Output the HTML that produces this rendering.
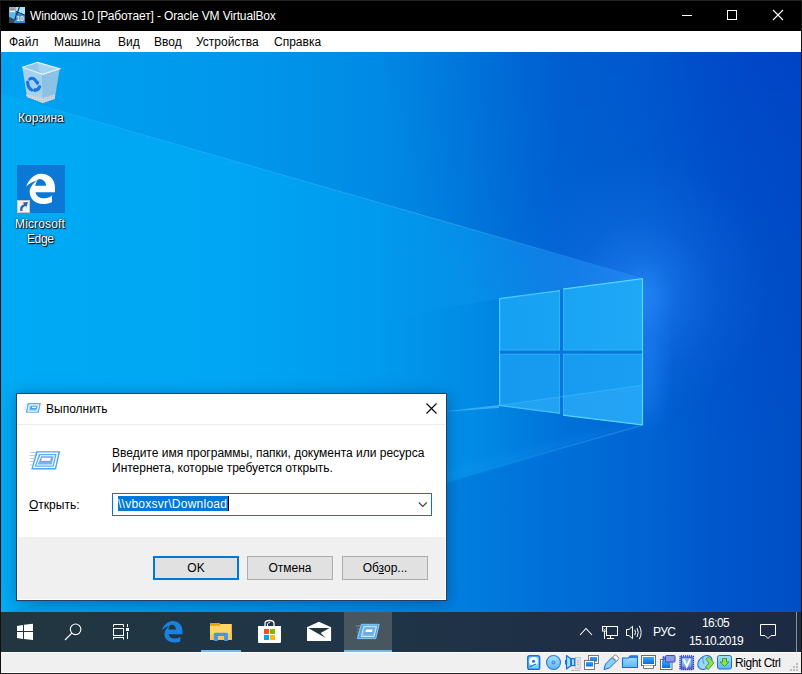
<!DOCTYPE html>
<html><head><meta charset="utf-8">
<style>
html,body{margin:0;padding:0}
body{width:802px;height:674px;overflow:hidden;position:relative;background:#333;font-family:"Liberation Sans",sans-serif;font-size:12px}
.a{position:absolute}
.t{position:absolute;white-space:nowrap;line-height:14px;font-size:12px}
</style></head><body>

<!-- title bar -->
<div class="a" style="left:1px;top:1px;width:800px;height:30px;background:#000"></div>
<div class="t" style="left:30px;top:9px;color:#fff;letter-spacing:-0.14px">Windows 10 [Работает] - Oracle VM VirtualBox</div>

<!-- title icon -->
<svg class="a" style="left:9px;top:7px" width="16" height="16" viewBox="0 0 16 16">
<rect x="0" y="0" width="16" height="16" fill="#3a4856"/>
<polygon points="0,5 7,5 5.8,12.7 0,10" fill="#58b8f0"/>
<polygon points="6.5,0 16,0 16,8.1 6.8,4.5" fill="#a8e4fa"/>
<polygon points="6.8,4.5 16,8.1 16,16 4.5,16 5.8,12.7" fill="#2c8ee0"/>
<polygon points="0,10 5.8,12.7 4.5,16 0,16" fill="#3c4a58"/>
<rect x="0.3" y="0.3" width="6.2" height="5" fill="#d8e0e8"/>
<rect x="1" y="1.2" width="4.8" height="2.2" fill="#8a949e"/>
<rect x="1" y="4" width="5.2" height="0.8" fill="#fff"/>
<line x1="10.4" y1="0" x2="5.8" y2="12.7" stroke="#1a2a40" stroke-width="1.1"/>
<line x1="6.8" y1="4.5" x2="16" y2="8.1" stroke="#1a2a40" stroke-width="0.9"/>
<rect x="7" y="8" width="8.5" height="6" fill="#5a8ab8" opacity="0.6"/>
<text x="7.3" y="13.8" font-size="7" font-family="Liberation Sans" fill="#f0f4f8" font-weight="bold" letter-spacing="-0.3">10</text>
</svg>
<!-- window buttons -->
<div class="a" style="left:682px;top:15px;width:10px;height:1px;background:#fff"></div>
<div class="a" style="left:727px;top:10px;width:8px;height:8px;border:1px solid #fff"></div>
<svg class="a" style="left:772px;top:9px" width="12" height="12" viewBox="0 0 12 12"><path d="M1 1L11 11M11 1L1 11" stroke="#fff" stroke-width="1.1"/></svg>

<!-- menu bar -->
<div class="a" style="left:1px;top:31px;width:800px;height:21px;background:#fff"></div>
<div class="t" style="left:9px;top:35px;color:#000">Файл</div>
<div class="t" style="left:54px;top:35px;color:#000">Машина</div>
<div class="t" style="left:118px;top:35px;color:#000">Вид</div>
<div class="t" style="left:154px;top:35px;color:#000">Ввод</div>
<div class="t" style="left:196px;top:35px;color:#000">Устройства</div>
<div class="t" style="left:274px;top:35px;color:#000">Справка</div>

<!-- desktop -->
<svg class="a" style="left:1px;top:52px" width="800" height="560" viewBox="1 52 800 560">
<defs>
<linearGradient id="bg" x1="1" y1="0" x2="801" y2="0" gradientUnits="userSpaceOnUse">
<stop offset="0" stop-color="#00aaf4"/><stop offset="0.28" stop-color="#00a6f3"/><stop offset="0.47" stop-color="#009aee"/><stop offset="0.587" stop-color="#008ce6"/><stop offset="0.623" stop-color="#0084e2"/><stop offset="0.7" stop-color="#0072da"/><stop offset="0.8025" stop-color="#0064d2"/><stop offset="0.9" stop-color="#0056cc"/><stop offset="1" stop-color="#004ec6"/>
</linearGradient>
<linearGradient id="topg" x1="1" y1="0" x2="801" y2="0" gradientUnits="userSpaceOnUse">
<stop offset="0" stop-color="#00a4f2"/><stop offset="0.12" stop-color="#009eef"/><stop offset="0.32" stop-color="#0096eb"/><stop offset="0.47" stop-color="#008ae5"/><stop offset="0.56" stop-color="#007ede"/><stop offset="0.7" stop-color="#0066d3"/><stop offset="0.8025" stop-color="#0064d2"/><stop offset="0.9" stop-color="#0056cc"/><stop offset="1" stop-color="#004ec6"/>
</linearGradient>
<linearGradient id="botg" x1="1" y1="0" x2="801" y2="0" gradientUnits="userSpaceOnUse">
<stop offset="0" stop-color="#00a2f1"/><stop offset="0.31" stop-color="#0092e9"/><stop offset="0.555" stop-color="#0080e0"/><stop offset="0.686" stop-color="#0070d8"/><stop offset="0.8025" stop-color="#0064d2"/><stop offset="0.9" stop-color="#0056cc"/><stop offset="1" stop-color="#004ec6"/>
</linearGradient>
<linearGradient id="lineg" x1="1" y1="0" x2="643" y2="0" gradientUnits="userSpaceOnUse">
<stop offset="0" stop-color="#60c8ff" stop-opacity="0"/><stop offset="0.12" stop-color="#60c8ff" stop-opacity="0.2"/><stop offset="0.7" stop-color="#80d8ff" stop-opacity="0.3"/><stop offset="1" stop-color="#80d8ff" stop-opacity="0.1"/>
</linearGradient>
<linearGradient id="line2" x1="643" y1="0" x2="440" y2="0" gradientUnits="userSpaceOnUse">
<stop offset="0" stop-color="#60c8ff" stop-opacity="0.35"/><stop offset="1" stop-color="#60c8ff" stop-opacity="0"/>
</linearGradient>
<radialGradient id="halo" cx="643" cy="300" r="75" gradientUnits="userSpaceOnUse">
<stop offset="0" stop-color="#2a90ff" stop-opacity="0.8"/><stop offset="0.45" stop-color="#1a78f0" stop-opacity="0.45"/><stop offset="1" stop-color="#1a70f0" stop-opacity="0"/>
</radialGradient>
<linearGradient id="paneT" x1="499" y1="0" x2="643" y2="0" gradientUnits="userSpaceOnUse">
<stop offset="0" stop-color="#16a0f2"/><stop offset="1" stop-color="#1ea8f6"/>
</linearGradient>
<linearGradient id="paneB" x1="499" y1="0" x2="643" y2="0" gradientUnits="userSpaceOnUse">
<stop offset="0" stop-color="#169af0"/><stop offset="1" stop-color="#1a9ef4"/>
</linearGradient>
<filter id="blur3" x="-30%" y="-30%" width="160%" height="160%"><feGaussianBlur stdDeviation="3"/></filter>
<filter id="blur8" x="-50%" y="-50%" width="200%" height="200%"><feGaussianBlur stdDeviation="10"/></filter>
<filter id="blur1"><feGaussianBlur stdDeviation="0.7"/></filter>
</defs>
<rect x="1" y="52" width="800" height="560" fill="url(#bg)"/>
<polygon points="1,52 801,52 801,278.6 643.5,278.6 1,94" fill="url(#topg)"/>
<polygon points="1,614 643.5,425 801,425 801,612 1,612" fill="url(#botg)"/>
<defs><radialGradient id="trd" cx="801" cy="40" r="420" gradientUnits="userSpaceOnUse"><stop offset="0" stop-color="#003cc4" stop-opacity="0.6"/><stop offset="0.5" stop-color="#0040c6" stop-opacity="0.25"/><stop offset="1" stop-color="#0040c6" stop-opacity="0"/></radialGradient></defs>
<rect x="1" y="52" width="800" height="560" fill="url(#trd)"/>
<polygon points="643,425 446,481 446,470 643,420" fill="#30a8ff" opacity="0.12" filter="url(#blur3)"/>
<line x1="1" y1="94" x2="643" y2="278.6" stroke="url(#lineg)" stroke-width="1"/>
<line x1="643" y1="425" x2="446" y2="481" stroke="url(#line2)" stroke-width="1"/>
<defs><linearGradient id="wedge" x1="380" y1="0" x2="643" y2="0" gradientUnits="userSpaceOnUse"><stop offset="0" stop-color="#20a0ff" stop-opacity="0"/><stop offset="1" stop-color="#30a8ff" stop-opacity="0.45"/></linearGradient>
<radialGradient id="halo2" cx="640" cy="285" r="130" gradientUnits="userSpaceOnUse"><stop offset="0" stop-color="#3a98ff" stop-opacity="0.45"/><stop offset="0.5" stop-color="#2a80f8" stop-opacity="0.18"/><stop offset="1" stop-color="#2a80f8" stop-opacity="0"/></radialGradient></defs>
<polygon points="380,203.5 643,278.6 499,298.5 380,320" fill="url(#wedge)"/>
<rect x="500" y="150" width="301" height="280" fill="url(#halo2)"/>
<ellipse cx="647" cy="345" rx="12" ry="78" fill="#2484fa" opacity="0.65" filter="url(#blur8)"/>
<rect x="540" y="200" width="261" height="260" fill="url(#halo)" opacity="0.45"/>
<polygon points="499,298.5 643,278.6 643,425 499,405.6" fill="#0a76dc"/>
<polygon points="499.5,298.5 560,290.5 560,350.5 499.5,350.5" fill="url(#paneT)"/>
<polygon points="563,289 642.6,278.6 642.6,350.5 563,350.5" fill="url(#paneT)"/>
<polygon points="499.5,353.8 560,353.8 560,413.5 499.5,405.6" fill="url(#paneB)"/>
<polygon points="563,353.8 642.6,353.8 642.6,425 563,415.3" fill="url(#paneB)"/>
<polygon points="499,405.6 560,397 560,413.5" fill="#50bcff" opacity="0.2"/>
<polygon points="563,396.5 642.6,385.2 642.6,425 563,415.3" fill="#50bcff" opacity="0.2"/>
<polygon points="440,412 499,405 499,408" fill="#7fd8ff" opacity="0.45" filter="url(#blur1)"/>
<g fill="none" stroke="#50d0ff" stroke-width="1" stroke-opacity="0.35">
<polygon points="500,299 559.5,291 559.5,350 500,350"/>
<polygon points="563.5,289.5 642,279.2 642,350 563.5,350"/>
<polygon points="500,354.3 559.5,354.3 559.5,413 500,405.2"/>
<polygon points="563.5,354.3 642,354.3 642,424.5 563.5,414.8"/>
</g>
<g fill="none" stroke="#60e0ff" stroke-width="1">
<polyline points="499.5,405.6 499.5,298.5 560,290.5" stroke-opacity="0.75"/>
<polyline points="563,289 642.6,278.6 642.6,425 563,415.3" stroke-opacity="0.95"/>
<polyline points="499.5,405.6 560,413.5" stroke-opacity="0.6"/>
<line x1="499" y1="405.6" x2="642.6" y2="385.2" stroke-opacity="0.3"/>
</g>
</svg>


<!-- desktop icons -->
<svg class="a" style="left:17px;top:58px" width="48" height="48" viewBox="0 0 48 48">
<defs><pattern id="dots" width="2" height="2" patternUnits="userSpaceOnUse"><rect width="2" height="2" fill="#d4d8dc"/><rect width="1" height="1" fill="#c0c6cc"/></pattern></defs>
<polygon points="5.3,9.3 25.6,16.4 26,45 10,39" fill="#a4d2ee"/>
<polygon points="25.6,16.4 42.7,10.7 37.7,41 26,45" fill="#8ec2e4"/>
<polygon points="8.7,36.5 25.8,40 26,45 10,39" fill="url(#dots)"/>
<polygon points="25.8,40 38.1,36.5 37.7,41 26,45" fill="url(#dots)" opacity="0.85"/>
<polygon points="5.3,9.3 20.7,4.3 42.7,10.7 25.6,16.4" fill="#90c8ea"/>
<polygon points="20.7,4.3 42.7,10.7 25.6,16.4 21.5,12" fill="#a6d4f0"/>
<polyline points="5.3,9.3 20.7,4.3 42.7,10.7 25.6,16.4 5.3,9.3" fill="none" stroke="#e4f2fb" stroke-width="1.2"/>
<g fill="none" stroke="#1a76de" stroke-width="3.2" stroke-linecap="round">
<path d="M12.8 21 Q16.5 18.5 20.2 24.8"/>
<path d="M10.6 24.2 Q10.8 29.5 14.6 31.8"/>
<path d="M17.6 32.4 Q21.5 32.2 22.6 28.8"/>
</g>
<path d="M19 26.5L22.5 22.5L21.5 26.5Z" fill="#1a76de"/>
<path d="M18.5 34.5L17 30L19.5 31Z" fill="#1a76de"/>
</svg>
<div class="t" style="left:18px;top:111px;color:#fff;text-shadow:0 0 2px rgba(0,0,0,0.9),1px 1px 1px #000">Корзина</div>

<svg class="a" style="left:17px;top:165px" width="48" height="48" viewBox="0 0 48 48">
<rect x="0" y="0" width="48" height="48" fill="#0a78d4"/>
<path fill="#fff" d="M9.1 21.8 C11 16 16 8.8 24 8.7 C32 8.6 38 14 38 22.5 L38 27.2 L18.5 27.2 C19 31 22.5 33.3 27.5 33.3 C30.5 33.3 33 32.5 35 30.6 L35 37 C32.5 38.5 29.5 39 26 39 C18 39 12.7 33.5 12.7 27 C12.7 23 15 19 19.9 15.7 C16 16.5 12 18.5 9.1 21.8 Z"/>
<path fill="#0a78d4" d="M18.1 20.7 L29 20.7 C29 17 26 14 22.5 14 C21.5 14 20.5 14.8 19.9 15.7 Z"/>
<rect x="0.5" y="35.5" width="12" height="12" fill="#f2f2f2" stroke="#c8c8c8" stroke-width="1"/>
<path d="M3.2 46 C3 42 4 40 7 39.5 L6 37.5 L11 37 L9.5 42 L8.5 41 C6 41.5 5 43.5 5.5 46 Z" fill="#2f63a4"/>
</svg>
<div class="t" style="left:15px;top:217px;color:#fff;letter-spacing:0.15px;text-shadow:0 0 2px rgba(0,0,0,0.9),1px 1px 1px #000">Microsoft</div>
<div class="t" style="left:27px;top:232px;color:#fff;letter-spacing:-0.4px;text-shadow:0 0 2px rgba(0,0,0,0.9),1px 1px 1px #000">Edge</div>
<!-- run dialog -->
<div class="a" style="left:16px;top:393px;width:429px;height:206px;border:1px solid #23405e;background:#fff;box-shadow:0 2px 14px rgba(0,20,60,0.35)"></div>
<div class="a" style="left:17px;top:424px;width:428px;height:1px;background:#ececec"></div>
<div class="a" style="left:18px;top:537px;width:427px;height:62px;background:#f0f0f0"></div>
<div class="t" style="left:46px;top:402px;color:#000">Выполнить</div>
<svg class="a" style="left:426px;top:403px" width="11" height="11" viewBox="0 0 11 11"><path d="M0.5 0.5L10.5 10.5M10.5 0.5L0.5 10.5" stroke="#000" stroke-width="1.1"/></svg>
<svg class="a" style="left:22px;top:400px" width="22" height="16" viewBox="22 400 22 16">
<path d="M27.7 403H40.9L38.8 412.7H25.8Z" fill="#5aaeee"/>
<path d="M29.2 404.8H38.9L37.2 411.3H27.9Z" fill="#9ad2f6" stroke="#fff" stroke-width="0.9"/>
<path d="M31 406.2H37L36.3 409.5H30.2Z" fill="#3a9ae8"/>
<rect x="32" y="406.8" width="3.8" height="1.3" fill="#fff"/>
<path d="M24.5 405H27M24.5 407H26.5M24 409H26" stroke="#b8dcf4" stroke-width="0.8"/>
</svg>
<svg class="a" style="left:27px;top:448px" width="36" height="24" viewBox="27 448 36 24">
<path d="M36.2 451.2H60.2L56 469.5H31.2Z" fill="#4ea4ec"/>
<path d="M37.6 452.6H58.4L54.9 468.1H32.9Z" fill="#fff"/>
<path d="M39 454H56.6L53.7 466.7H34.6Z" fill="#58acf0"/>
<path d="M40.3 455.3H55L52.6 465.4H36.3Z" fill="#fff"/>
<path d="M41.3 456.3H53.8L51.8 464.4H37.6Z" fill="#6ab8f2"/>
<path d="M41.5 457.3H51.5L50.6 461.3H40.6Z" fill="#fff" stroke="#8a70d0" stroke-width="0.7"/>
<path d="M30 452.5H36M29.5 455.5H35.3M30 458.5H34.5M29.5 461.5H33.8M30 465H33" stroke="#a8d0ee" stroke-width="0.9"/>
</svg>
<div class="t" style="left:112px;top:446px;color:#000">Введите имя программы, папки, документа или ресурса</div>
<div class="t" style="left:112px;top:461px;color:#000">Интернета, которые требуется открыть.</div>
<div class="t" style="left:29px;top:498px;color:#000"><span style="text-decoration:underline">О</span>ткрыть:</div>
<div class="a" style="left:112px;top:493px;width:318px;height:21px;border:1px solid #0078d7;background:#fff"></div>
<div class="a" style="left:118px;top:496px;width:110px;height:15px;background:#0078d7"></div>
<div class="t" style="left:118px;top:497px;color:#fff;letter-spacing:0.25px">\\vboxsvr\Download</div>
<div class="a" style="left:228px;top:496px;width:1px;height:15px;background:#000"></div>
<svg class="a" style="left:418px;top:501px" width="10" height="7" viewBox="0 0 10 7"><path d="M0.8 1.5L4.8 5.5L8.8 1.5" stroke="#444" stroke-width="1.2" fill="none"/></svg>
<div class="a" style="left:153px;top:556px;width:82px;height:20px;border:2px solid #0078d7;background:#e1e1e1"></div>
<div class="t" style="left:153px;top:561px;width:86px;text-align:center;color:#000">OK</div>
<div class="a" style="left:247px;top:556px;width:84px;height:22px;border:1px solid #adadad;background:#e1e1e1"></div>
<div class="t" style="left:247px;top:561px;width:86px;text-align:center;color:#000">Отмена</div>
<div class="a" style="left:342px;top:556px;width:84px;height:22px;border:1px solid #adadad;background:#e1e1e1"></div>
<div class="t" style="left:342px;top:561px;width:86px;text-align:center;color:#000">Об<span style="text-decoration:underline">з</span>ор...</div>

<!-- taskbar -->
<div class="a" style="left:1px;top:612px;width:800px;height:40px;background:linear-gradient(90deg,#21363f 0%,#203548 45%,#1e2e45 75%,#1c2a42 100%)"></div>
<div class="a" style="left:344px;top:612px;width:48px;height:40px;background:#48565f"></div>
<div class="a" style="left:201px;top:650px;width:40px;height:2px;background:#76b9ed"></div>
<div class="a" style="left:344px;top:650px;width:48px;height:2px;background:#76b9ed"></div>
<!-- start -->
<svg class="a" style="left:16px;top:623px" width="18" height="18" viewBox="16 623 18 18">
<g fill="#fff"><polygon points="17,626 23,625.1 23,631 17,631"/><polygon points="24,624.8 33,623.8 33,631 24,631"/>
<polygon points="17,632 23,632 23,638.9 17,638"/><polygon points="24,632 33,632 33,640 24,639"/></g>
</svg>
<!-- search -->
<svg class="a" style="left:60px;top:618px" width="26" height="26" viewBox="60 618 26 26">
<circle cx="75.6" cy="629.3" r="5.3" fill="none" stroke="#fff" stroke-width="1.1"/>
<line x1="71.8" y1="633.2" x2="65" y2="640" stroke="#fff" stroke-width="1.2"/>
</svg>
<!-- task view -->
<svg class="a" style="left:110px;top:620px" width="22" height="22" viewBox="110 620 22 22" fill="none" stroke="#fff" stroke-width="1">
<path d="M113.5 627V624.5H123.5V627"/>
<rect x="113.5" y="628.5" width="10" height="7"/>
<path d="M113.5 637V639.5M123.5 637V639.5M113.5 637.5H123.5"/>
<path d="M127.5 624V627M127.5 632V639"/>
<rect x="126" y="628" width="3" height="3" fill="#fff" stroke="none"/>
</svg>
<!-- edge -->
<svg class="a" style="left:158px;top:618px" width="28" height="28" viewBox="158 618 28 28">
<g transform="translate(161.9,621.1) scale(0.71) translate(-9.1,-8.7)">
<path fill="#1a82de" d="M9.1 21.8 C11 16 16 8.8 24 8.7 C32 8.6 38 14 38 22.5 L38 27.2 L18.5 27.2 C19 31 22.5 33.3 27.5 33.3 C30.5 33.3 33 32.5 35 30.6 L35 37 C32.5 38.5 29.5 39 26 39 C18 39 12.7 33.5 12.7 27 C12.7 23 15 19 19.9 15.7 C16 16.5 12 18.5 9.1 21.8 Z"/>
<path fill="#21353f" d="M18.1 20.7 L29 20.7 C29 17 26 14 22.5 14 C21.5 14 20.5 14.8 19.9 15.7 Z"/>
</g>
</svg>
<!-- explorer -->
<svg class="a" style="left:208px;top:620px" width="26" height="24" viewBox="208 620 26 24">
<rect x="210" y="624" width="21.8" height="15.8" fill="#ffd666"/>
<rect x="210" y="634" width="21.8" height="5.8" fill="#f8c850"/>
<path d="M210 623H219.5L220.5 624.2L219.8 625.8H210Z" fill="#e8a00a"/>
<path d="M213.9 641V634Q213.9 632.7 215.2 632.7H226.6Q227.9 632.7 227.9 634V641H224.1V636H217.9V641Z" fill="#3f98e8"/>
</svg>
<!-- store -->
<svg class="a" style="left:256px;top:618px" width="28" height="28" viewBox="256 618 28 28">
<path d="M258 626H281V641.8Q281 643 279.8 643H259.2Q258 643 258 641.8Z" fill="#fff"/>
<path d="M265 626V623.5Q265 620.5 269.5 620.5Q274 620.5 274 623.5V626" fill="none" stroke="#fff" stroke-width="1.3"/>
<path d="M267.5 626V624Q268 622.5 270 622.5" fill="none" stroke="#fff" stroke-width="1"/>
<rect x="264" y="629" width="5" height="5" fill="#f25022"/><rect x="270" y="629" width="5" height="5" fill="#7fba00"/>
<rect x="264" y="635" width="5" height="5" fill="#00a4ef"/><rect x="270" y="635" width="5" height="5" fill="#ffb900"/>
</svg>
<!-- mail -->
<svg class="a" style="left:305px;top:620px" width="28" height="24" viewBox="305 620 28 24">
<path d="M307 627.3L318.9 621.8L331.1 627.3V640.9H307Z" fill="#fff"/>
<path d="M308.2 628H329.6L320.7 633.1L325.8 638Z" fill="#21353f"/>
</svg>
<!-- run (taskbar) -->
<svg class="a" style="left:352px;top:620px" width="32" height="24" viewBox="352 620 32 24">
<path d="M361.4 624.3H379.2L375.8 638.6H357.4Z" fill="#4ea6ec" stroke="#8fd0ff" stroke-width="0.9"/>
<path d="M363.8 626.3H376.5L374 636.5H361.3Z" fill="#7cc0f2" stroke="#d8f0ff" stroke-width="0.9"/>
<path d="M365 628H374.5L372.8 634.8H363.4Z" fill="#5fb0ec" stroke="#b0a0a8" stroke-width="0.6"/>
<path d="M366 629.4H372.6L372 632H365.4Z" fill="#fff"/>
<path d="M356 626H361M357 629H360.5M356.5 632H360M357 635H359.5" stroke="#9cc8e8" stroke-width="0.9" opacity="0.6"/>
</svg>
<!-- tray -->
<svg class="a" style="left:578px;top:624px" width="16" height="14" viewBox="578 624 16 14"><path d="M580 635L586 628.5L592 635" fill="none" stroke="#fff" stroke-width="1.1"/></svg>
<svg class="a" style="left:600px;top:624px" width="20" height="18" viewBox="600 624 20 18" fill="none" stroke="#fff" stroke-width="1">
<rect x="606.5" y="626.5" width="11" height="9"/>
<rect x="602.5" y="626.5" width="4" height="4.5" fill="#1f2e40"/>
<path d="M603.5 628.5L604.5 629.7L605.5 628.5" stroke-width="0.8"/>
<path d="M604.5 631V639M610.5 635.5V638.5M607 638.5H614"/>
</svg>
<svg class="a" style="left:624px;top:624px" width="20" height="16" viewBox="624 624 20 16" fill="none" stroke="#fff" stroke-width="1">
<path d="M626.5 629.5H629L632.5 626.3V638.7L629 635.5H626.5Z"/>
<path d="M634.8 629.8Q636.2 632.5 634.8 635.2"/>
<path d="M637 628Q639.5 632.5 637 637"/>
<path d="M639.3 625.8Q643 632.5 639.3 639.2"/>
</svg>
<div class="t" style="left:653px;top:625px;color:#fff;letter-spacing:-0.6px">РУС</div>
<div class="t" style="left:702px;top:616px;color:#fff;letter-spacing:-0.6px">16:05</div>
<div class="t" style="left:689px;top:634px;color:#fff;letter-spacing:-0.6px">15.10.2019</div>
<svg class="a" style="left:758px;top:622px" width="20" height="20" viewBox="758 622 20 20" fill="none" stroke="#fff" stroke-width="1">
<path d="M760.5 624.5H775.5V635.5H771L768 638.5L765 635.5H760.5Z"/>
</svg>
<div class="a" style="left:796px;top:612px;width:1px;height:40px;background:#8a949c"></div>

<!-- status bar -->
<div class="a" style="left:1px;top:652px;width:800px;height:1px;background:#fff"></div>
<div class="a" style="left:1px;top:653px;width:800px;height:19px;background:#f0f0f0"></div>
<div class="a" style="left:1px;top:672px;width:800px;height:1px;background:#fff"></div>
<div class="a" style="left:0;top:673px;width:802px;height:1px;background:#222"></div>
<div class="t" style="left:735px;top:656px;color:#000;letter-spacing:-0.45px">Right Ctrl</div>
<svg class="a" style="left:520px;top:652px" width="282" height="21" viewBox="520 652 282 21">
<defs>
<linearGradient id="lb" x1="0" y1="0" x2="0" y2="1"><stop offset="0" stop-color="#a8e0fc"/><stop offset="1" stop-color="#5ab8f4"/></linearGradient>
<linearGradient id="scr" x1="0" y1="0" x2="0" y2="1"><stop offset="0" stop-color="#38a8f8"/><stop offset="1" stop-color="#0a6ee0"/></linearGradient>
<linearGradient id="chip" x1="0" y1="0" x2="0" y2="1"><stop offset="0" stop-color="#9ab4f0"/><stop offset="0.5" stop-color="#80c8f0"/><stop offset="1" stop-color="#7a7ad8"/></linearGradient>
</defs>
<!-- hdd -->
<rect x="527.8" y="655.7" width="11.8" height="13.6" rx="1.8" fill="#78d4fa" stroke="#1a6ed8" stroke-width="1.5"/>
<circle cx="533.6" cy="661.4" r="4.4" fill="#fff"/>
<circle cx="533.5" cy="661.2" r="1.5" fill="#1a6ed8"/>
<path d="M529.5 667L536 664" stroke="#1a6ed8" stroke-width="1.3"/>
<!-- cd -->
<circle cx="553.5" cy="662.5" r="7" fill="url(#lb)" stroke="#2a7ad8" stroke-width="1.1"/>
<circle cx="553.5" cy="662.5" r="1.4" fill="none" stroke="#2a6ac8" stroke-width="0.9"/>
<!-- audio -->
<rect x="575.5" y="657.5" width="4.8" height="11" fill="#e4e4e4" stroke="#c4c4c4" stroke-width="0.8"/>
<path d="M577 660.5H579M577 662.5H579M577 664.5H579" stroke="#a8a8a8" stroke-width="0.7"/>
<path d="M571 670.3H580" stroke="#b4b4b4" stroke-width="1"/>
<rect x="565" y="660" width="1.6" height="4.5" fill="#1a6ed8"/>
<path d="M566.5 655.6L570.8 658.8V665.8L566.5 669Z" fill="#9ae0fc" stroke="#1a6ed8" stroke-width="1.2" stroke-linejoin="round"/>
<rect x="571.4" y="658.6" width="3.3" height="7" fill="#90dcfa" stroke="#1a6ed8" stroke-width="1.2"/>
<!-- network -->
<rect x="588.5" y="655.5" width="10" height="8" fill="#fff" stroke="#6a6a6a" stroke-width="0.9"/>
<rect x="590" y="657" width="7" height="4.5" fill="url(#scr)"/>
<rect x="584.5" y="660.5" width="10" height="9" fill="#fff" stroke="#6a6a6a" stroke-width="0.9"/>
<rect x="586" y="662" width="7" height="4.5" fill="url(#scr)"/>
<!-- usb -->
<path d="M604 669.5L605.5 664L612 657.5L616 661.5L609.5 668Z" fill="#88d0f8" stroke="#1a6ad8" stroke-width="1"/>
<path d="M612.5 657L615.5 654.8L619 658.3L616.8 661.3Z" fill="#fff" stroke="#777" stroke-width="0.9"/>
<!-- folder -->
<path d="M622.5 658V667.5H637.5V656H630L628.5 658Z" fill="url(#lb)" stroke="#1a6ad8" stroke-width="1.1"/>
<path d="M629.5 656.5L630.5 655.5H637.5V658H628.5Z" fill="#2a78d8"/>
<!-- display -->
<rect x="641.5" y="655.5" width="14" height="10" fill="#fff" stroke="#6a6a6a" stroke-width="1"/>
<rect x="643" y="657" width="11" height="7" fill="url(#scr)"/>
<path d="M643.5 665.5V668.5H653.5V665.5" fill="#fff" stroke="#6a6a6a" stroke-width="0.9"/>
<!-- video capture -->
<rect x="660.5" y="659.5" width="11.5" height="10" fill="#fff" stroke="#6a6a6a" stroke-width="1"/>
<rect x="662" y="661" width="8.5" height="7" fill="url(#scr)"/>
<rect x="665.5" y="655.5" width="9.5" height="6.5" rx="1" fill="#8a9ae8" stroke="#3a48b8" stroke-width="1"/>
<path d="M663 656.5V661L665.5 659.5V657.5Z" fill="#6a78d8" stroke="#3a48b8" stroke-width="0.8"/>
<!-- v chip -->
<rect x="680" y="656" width="13.5" height="13.5" rx="1" fill="url(#chip)" stroke="#2a3aa8" stroke-width="1.3" stroke-dasharray="1.2 0.8"/>
<rect x="681.5" y="657.5" width="10.5" height="10.5" fill="url(#chip)" stroke="#3a4ab8" stroke-width="0.8"/>
<path d="M683.5 659L686.8 666.5L690 659" fill="none" stroke="#fff" stroke-width="1.9"/>
<!-- globe -->
<ellipse cx="0" cy="0" rx="8" ry="6" transform="translate(705,662.5) rotate(-40)" fill="#9ad8fa" stroke="#1a6ed8" stroke-width="1"/>
<path d="M703 656.5Q702 660 704 664" fill="none" stroke="#1a6ed8" stroke-width="0.8" opacity="0.8"/>
<path d="M705.8 659.2L708.3 657L714 662.8L708.3 669.5L705.5 667.3L709 663Z" fill="#8ee05a" stroke="#3a9a1a" stroke-width="0.9" stroke-linejoin="round"/>
<!-- download -->
<rect x="717.5" y="655.5" width="14" height="13.5" rx="2" fill="url(#lb)" stroke="#1a6ad8" stroke-width="1"/>
<path d="M722.5 658.5H726.5V662H729L724.5 666.5L720 662H722.5Z" fill="#8ee05a" stroke="#3a9a1a" stroke-width="0.9"/>
<!-- grip -->
<g fill="#bcbcbc"><rect x="796" y="663" width="2" height="2"/><rect x="793" y="666" width="2" height="2"/><rect x="796" y="666" width="2" height="2"/><rect x="790" y="669" width="2" height="2"/><rect x="793" y="669" width="2" height="2"/><rect x="796" y="669" width="2" height="2"/></g>
</svg>
<div class="a" style="left:0;top:0;width:802px;height:1px;background:#242424"></div>
<div class="a" style="left:0;top:1px;width:1px;height:673px;background:#141010"></div>
<div class="a" style="left:801px;top:1px;width:1px;height:673px;background:#141010"></div>
</body>
</html>
